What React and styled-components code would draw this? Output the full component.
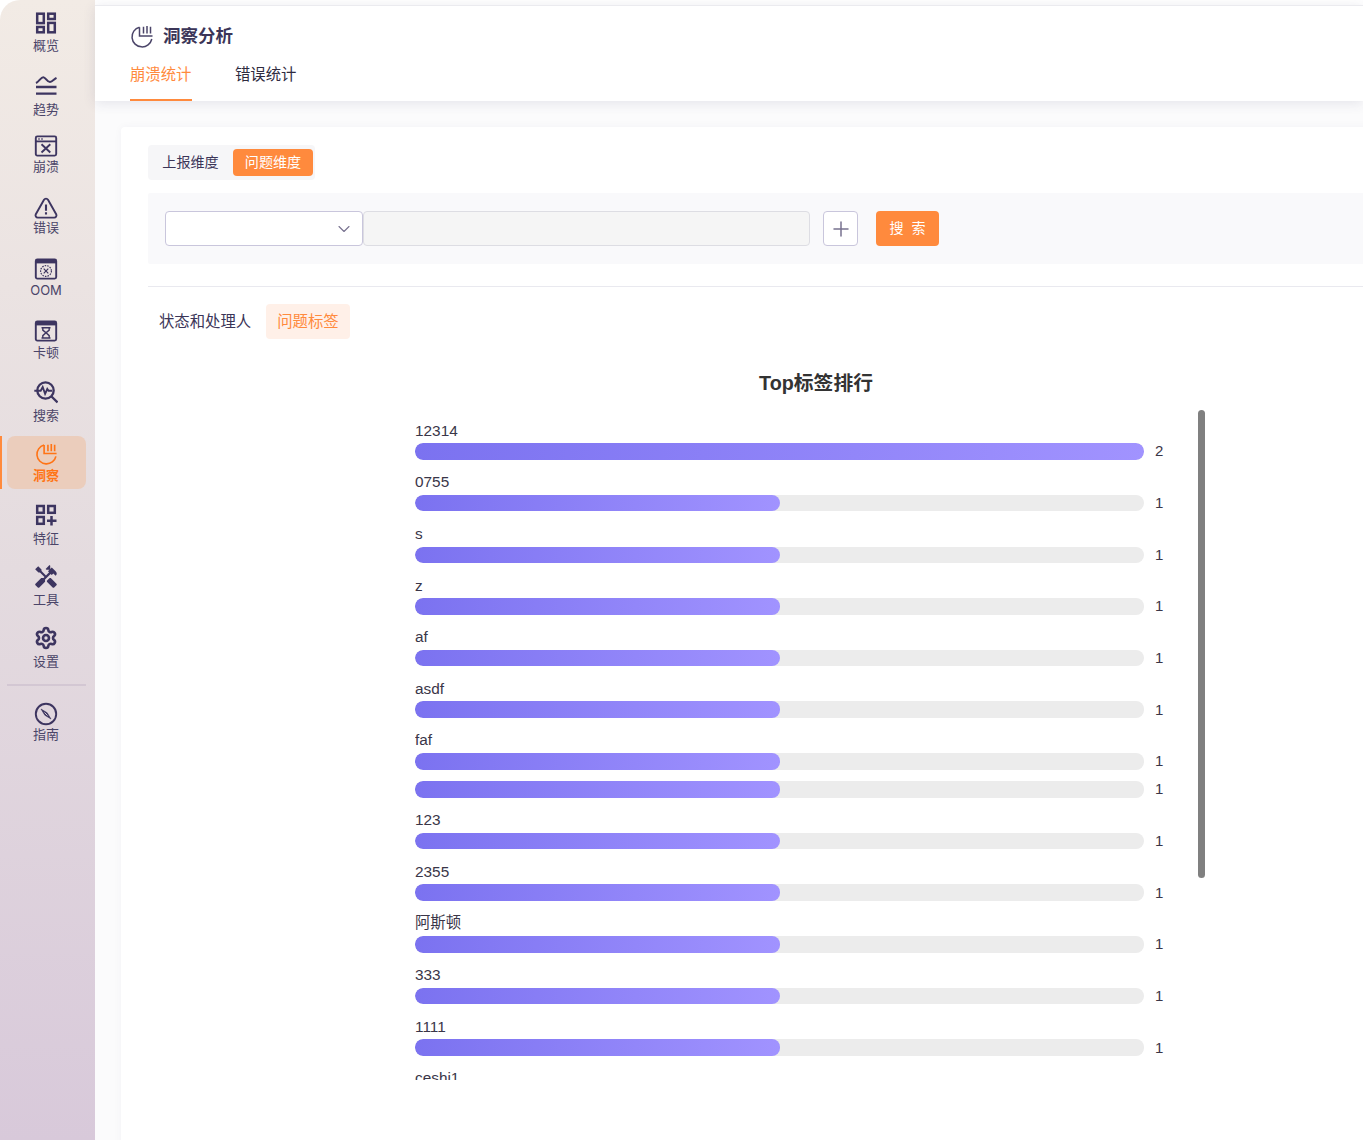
import React from "react";
import styled, { createGlobalStyle } from "styled-components";
import { MdHandyman } from "react-icons/md";
import { Settings, ChevronDown, Plus } from "lucide-react";

const UI_FONT = `Inter, "Noto Sans CJK SC", "Noto Sans", sans-serif`;
const CHART_FONT = `"Liberation Sans", "Noto Sans CJK SC", sans-serif`;

const Glyph = ({ children, size = 24 }) => (
  <svg width={size} height={size} viewBox="0 0 24 24" fill="none" stroke="currentColor" strokeWidth="2">
    {children}
  </svg>
);

const PieBars = ({ width = 1.6 }) => (
  <>
    <path strokeWidth={width} d="M9.5 3.2A10 10 0 1 0 21.8 15" />
    <path strokeWidth={width} d="M9.5 3.2V12H22.5M13.5 2.8V9.6M17 2V9.6M20.5 2.8V9.6" />
  </>
);

const icons = {
  overview: (
    <Glyph>
      <rect x="3.2" y="2.7" width="6.6" height="9.4" strokeWidth="2.5" />
      <rect x="3.2" y="16" width="6.6" height="5.3" strokeWidth="2.5" />
      <rect x="14.2" y="2.7" width="6.6" height="5.3" strokeWidth="2.5" />
      <rect x="14.2" y="11.9" width="6.6" height="9.4" strokeWidth="2.5" />
    </Glyph>
  ),
  trend: (
    <Glyph>
      <path strokeWidth="2" d="M2 10c3-1.5 5-5.8 7.3-5.8 2.4 0 3.6 4.8 6.7 4.8 2.4 0 4-2.9 6.5-4.2" />
      <path strokeWidth="2.3" d="M2 14h20.5M2 20.6h20.5" />
    </Glyph>
  ),
  crash: (
    <Glyph>
      <rect x="1.8" y="2.4" width="20.4" height="19.2" rx="1.5" strokeWidth="1.9" />
      <path strokeWidth="1.8" d="M2 7.4h20" />
      <path strokeWidth="1.5" d="M4.3 5h1.4M7.3 5h1.4" />
      <path strokeWidth="1.9" d="M7.5 10.2l8.8 8.3M16.3 10.2l-8.8 8.3" />
    </Glyph>
  ),
  error: (
    <Glyph>
      <path strokeWidth="1.9" d="M10 3.8a2.3 2.3 0 0 1 4 0l8.2 14.4a2.3 2.3 0 0 1-2 3.4H3.8a2.3 2.3 0 0 1-2-3.4z" />
      <path strokeWidth="2.1" d="M12 8.5v6.3M12 16.3v2.1" />
    </Glyph>
  ),
  oom: (
    <Glyph>
      <rect x="1.8" y="2.4" width="20.4" height="19.2" rx="1.5" strokeWidth="1.9" />
      <path strokeWidth="3.6" d="M2 4.6h20" />
      <circle cx="12" cy="14" r="5.4" strokeWidth="1.2" strokeDasharray="1.6 1" />
      <path strokeWidth="1.2" d="M9.7 11.7l4.6 4.6M14.3 11.7l-4.6 4.6" />
    </Glyph>
  ),
  stutter: (
    <Glyph>
      <rect x="1.8" y="2.4" width="20.4" height="19.2" rx="1.5" strokeWidth="1.9" />
      <path strokeWidth="3.6" d="M2 4.6h20" />
      <path strokeWidth="1.4" d="M7.5 8.7h9M7.5 19h9M8.8 8.7v2.4l3.2 2.7 3.2-2.7V8.7M8.8 19v-2.4l3.2-2.8 3.2 2.8V19" />
    </Glyph>
  ),
  search: (
    <Glyph>
      <circle cx="11.5" cy="10.5" r="8.2" strokeWidth="2.3" />
      <path strokeWidth="1.9" d="M0.3 10.8h6.4l2-3.8 2.4 6.8 2.2-4.8 1.3 1.8h3.6" />
      <path strokeWidth="2.3" d="M17.5 16.5l6 6" />
    </Glyph>
  ),
  insight: (
    <Glyph size={23}>
      <PieBars width={1.7} />
    </Glyph>
  ),
  feature: (
    <Glyph>
      <rect x="3.2" y="3" width="6.6" height="6.8" strokeWidth="2.5" />
      <rect x="14.2" y="3" width="6.6" height="6.8" strokeWidth="2.5" />
      <rect x="3.2" y="14" width="6.6" height="6.8" strokeWidth="2.5" />
      <path strokeWidth="2.5" d="M17.5 13v9.5M13 17.8h9.5" />
    </Glyph>
  ),
  tools: <MdHandyman size={26} />,
  settings: <Settings size={24} strokeWidth={2.6} />,
  guide: (
    <Glyph>
      <circle cx="12" cy="12" r="10.2" strokeWidth="1.9" />
      <path strokeWidth="0.6" fill="currentColor" d="M7 7l6.2 3.8L17 17l-6.2-3.8z" />
      <path stroke="#e2d8e0" strokeWidth="0.9" d="M10.5 10.5l3 3" />
    </Glyph>
  ),
};

const navItems = [
  { key: "overview", label: "概览", gap: 4 },
  { key: "trend", label: "趋势", gap: 6.5 },
  { key: "crash", label: "崩溃", gap: 2 },
  { key: "error", label: "错误", gap: 1.5 },
  { key: "oom", label: "OOM", gap: 3 },
  { key: "stutter", label: "卡顿", gap: 3 },
  { key: "search", label: "搜索", gap: 5 },
  { key: "insight", label: "洞察", gap: 3, active: true },
  { key: "feature", label: "特征", gap: 4.5 },
  { key: "tools", label: "工具", gap: 4 },
  { key: "settings", label: "设置", gap: 4.5 },
];

const bars = [
  { name: "12314", value: 2 },
  { name: "0755", value: 1 },
  { name: "s", value: 1 },
  { name: "z", value: 1 },
  { name: "af", value: 1 },
  { name: "asdf", value: 1 },
  { name: "faf", value: 1 },
  { name: "", value: 1 },
  { name: "123", value: 1 },
  { name: "2355", value: 1 },
  { name: "阿斯顿", value: 1 },
  { name: "333", value: 1 },
  { name: "1111", value: 1 },
  { name: "ceshi1", value: 1 },
];

export default function App() {
  return (
    <Page>
      <GlobalStyle />
      <Sidebar>
        {navItems.map((item) => (
          <NavItem key={item.key} $active={item.active}>
            <NavIcon>{icons[item.key]}</NavIcon>
            <NavLabel $active={item.active} $gap={item.gap}>
              {item.label}
            </NavLabel>
          </NavItem>
        ))}
        <NavDivider />
        <NavItem>
          <NavIcon>{icons.guide}</NavIcon>
          <NavLabel $gap={1.5}>指南</NavLabel>
        </NavItem>
      </Sidebar>
      <Main>
        <Header>
          <HeaderTitle>
            <TitleIcon>
              <Glyph>
                <PieBars width={1.5} />
              </Glyph>
            </TitleIcon>
            <h1>洞察分析</h1>
          </HeaderTitle>
          <HeaderTabs>
            <HeaderTab $active>崩溃统计</HeaderTab>
            <HeaderTab>错误统计</HeaderTab>
          </HeaderTabs>
        </Header>
        <Body>
          <Card>
            <Segment>
              <SegmentItem>上报维度</SegmentItem>
              <SegmentItem $active>问题维度</SegmentItem>
            </Segment>
            <FilterBar>
              <SelectBox>
                <ChevronDown size={20} strokeWidth={1.3} />
              </SelectBox>
              <FilterInput />
              <AddButton>
                <Plus size={24} strokeWidth={1.5} />
              </AddButton>
              <SearchButton>搜 索</SearchButton>
            </FilterBar>
            <Divider />
            <SubTabs>
              <SubTab>状态和处理人</SubTab>
              <SubTab $active>问题标签</SubTab>
            </SubTabs>
            <Chart>
              <ChartTitle>Top标签排行</ChartTitle>
              <ChartViewport>
                {bars.map((bar, i) => (
                  <BarRow key={i}>
                    {bar.name && <BarLabel>{bar.name}</BarLabel>}
                    <BarLine>
                      <BarTrack>
                        <BarFill style={{ width: `${(bar.value / 2) * 100}%` }} />
                      </BarTrack>
                      <BarValue>{bar.value}</BarValue>
                    </BarLine>
                  </BarRow>
                ))}
                <ScrollThumb />
              </ChartViewport>
            </Chart>
          </Card>
        </Body>
      </Main>
    </Page>
  );
}

const GlobalStyle = createGlobalStyle`
  html, body {
    margin: 0;
    padding: 0;
    background: #fff;
    overflow: hidden;
  }
  * {
    box-sizing: border-box;
  }
`;

const Page = styled.div`
  display: flex;
  width: 1363px;
  height: 1140px;
  overflow: hidden;
  font-family: ${UI_FONT};
  color: #3b3558;
`;

const Sidebar = styled.nav`
  flex: 0 0 95px;
  padding-top: 5.5px;
  border-top-left-radius: 20px;
  background: linear-gradient(180deg, #f2ebe5 0%, #e4dbdf 50%, #d8c9da 100%);
`;

const NavItem = styled.div`
  position: relative;
  display: flex;
  flex-direction: column;
  align-items: center;
  height: 53px;
  margin: 0 9px 8.5px 7px;
  padding: 7.5px 1px 0 0;
  border-radius: 8px;
  color: ${(p) => (p.$active ? "#ff7416" : "#3d3560")};
  background: ${(p) => (p.$active ? "#ebcdbc" : "transparent")};

  &::before {
    content: "";
    display: ${(p) => (p.$active ? "block" : "none")};
    position: absolute;
    left: -7px;
    top: 0;
    bottom: 0;
    width: 2px;
    background: #ff8a3d;
  }
`;

const NavIcon = styled.div`
  display: flex;
  align-items: center;
  justify-content: center;
  height: 20px;
`;

const NavLabel = styled.div`
  margin-top: ${(p) => p.$gap}px;
  font-size: 13px;
  line-height: 16px;
  font-weight: ${(p) => (p.$active ? 700 : 400)};
  color: ${(p) => (p.$active ? "#ff7416" : "#4b4569")};
`;

const NavDivider = styled.div`
  height: 2px;
  margin: 10px 9px 11px 7px;
  background: #d3c7d3;
`;

const Main = styled.main`
  flex: 1;
  min-width: 0;
  background: #fbfbfc;
  border-top: 5px solid #fff;
`;

const Header = styled.header`
  height: 96px;
  padding: 17px 0 0 35px;
  background: #fff;
  border-top: 1px solid #ebebef;
  box-shadow: 0 2px 12px rgba(60, 60, 100, 0.12);
`;

const HeaderTitle = styled.div`
  display: flex;
  align-items: center;
  height: 26px;

  h1 {
    margin: 0 0 0 9px;
    font-size: 17.5px;
    font-weight: 700;
    line-height: 26px;
    color: #3b3558;
  }
`;

const TitleIcon = styled.div`
  display: flex;
  height: 24px;
  color: #4b4569;
`;

const HeaderTabs = styled.div`
  display: flex;
  gap: 43px;
  margin-top: 9px;
`;

const HeaderTab = styled.div`
  height: 43px;
  padding-top: 6px;
  width: 62px;
  font-size: 15.36px;
  line-height: 22px;
  white-space: nowrap;
  color: ${(p) => (p.$active ? "#ff8a3d" : "#2f2b3f")};
  border-bottom: 2px solid ${(p) => (p.$active ? "#ff8a3d" : "transparent")};
`;

const Body = styled.div`
  padding: 26px 0 0 26px;
`;

const Card = styled.section`
  width: 1500px;
  height: 1100px;
  padding: 18px 0 0 27px;
  background: #fff;
  border-radius: 4px;
  box-shadow: 0 0 8px rgba(60, 60, 100, 0.04);
`;

const Segment = styled.div`
  display: inline-flex;
  align-items: center;
  height: 35px;
  padding: 0 2px 0 0;
  background: #f6f6f8;
  border-radius: 4px;
  vertical-align: top;
`;

const SegmentItem = styled.div`
  width: ${(p) => (p.$active ? "80px" : "85px")};
  height: 27px;
  font-size: 14.08px;
  line-height: 26px;
  text-align: center;
  border-radius: 4px;
  color: ${(p) => (p.$active ? "#fff" : "#3b3558")};
  background: ${(p) => (p.$active ? "#ff8a3d" : "transparent")};
`;

const FilterBar = styled.div`
  display: flex;
  align-items: center;
  height: 71px;
  margin-top: 13px;
  padding-left: 17px;
  background: #f9f9fb;
  border-radius: 2px;
`;

const SelectBox = styled.div`
  display: flex;
  align-items: center;
  justify-content: flex-end;
  width: 198px;
  height: 35px;
  padding-right: 8px;
  color: #77718f;
  background: #fff;
  border: 1px solid #c9c6dc;
  border-radius: 4px;
`;

const FilterInput = styled.div`
  width: 447px;
  height: 35px;
  background: #f5f5f5;
  border: 1px solid #dddde3;
  border-radius: 4px;
`;

const AddButton = styled.div`
  display: flex;
  align-items: center;
  justify-content: center;
  width: 35px;
  height: 35px;
  margin-left: 13px;
  color: #77718f;
  background: #fff;
  border: 1px solid #c9c6dc;
  border-radius: 4px;
`;

const SearchButton = styled.div`
  width: 63px;
  height: 35px;
  margin-left: 18px;
  padding-left: 2px;
  font-size: 14.08px;
  letter-spacing: 2px;
  line-height: 34px;
  text-align: center;
  color: #fff;
  background: #ff8a3d;
  border-radius: 4px;
`;

const Divider = styled.div`
  height: 1px;
  margin-top: 22px;
  background: #e9e9ef;
`;

const SubTabs = styled.div`
  display: flex;
  gap: 4px;
  margin-top: 17px;
`;

const SubTab = styled.div`
  height: 35px;
  padding: 0 11px;
  font-size: 15.36px;
  line-height: 35px;
  border-radius: 4px;
  color: ${(p) => (p.$active ? "#ff8a3d" : "#3b3558")};
  background: ${(p) => (p.$active ? "#fff0e8" : "transparent")};
`;

const Chart = styled.div`
  width: 802px;
  margin: 30px 0 0 267px;
  font-family: ${CHART_FONT};
`;

const ChartTitle = styled.div`
  height: 28px;
  font-size: 19.8px;
  line-height: 28px;
  font-weight: 700;
  text-align: center;
  color: #333;
`;

const ChartViewport = styled.div`
  position: relative;
  height: 670px;
  margin-top: 13px;
  padding-top: 9.6px;
  overflow: hidden;
`;

const BarRow = styled.div`
  padding-bottom: 11.5px;
`;

const BarLabel = styled.div`
  height: 23.65px;
  font-size: 15.36px;
  line-height: 22.6px;
  color: #3a3648;
`;

const BarLine = styled.div`
  display: flex;
  align-items: center;
`;

const BarTrack = styled.div`
  width: 729px;
  height: 16.5px;
  border-radius: 8px;
  background: #ececec;
  overflow: hidden;
`;

const BarFill = styled.div`
  height: 100%;
  border-radius: 8px;
  background: linear-gradient(95deg, #7b72f0 0%, #a193ff 100%);
`;

const BarValue = styled.div`
  margin-left: 11px;
  font-size: 15px;
  line-height: 16px;
  color: #3a3648;
`;

const ScrollThumb = styled.div`
  position: absolute;
  top: 0;
  left: 783px;
  width: 7px;
  height: 468px;
  border-radius: 4px;
  background: #808080;
`;
